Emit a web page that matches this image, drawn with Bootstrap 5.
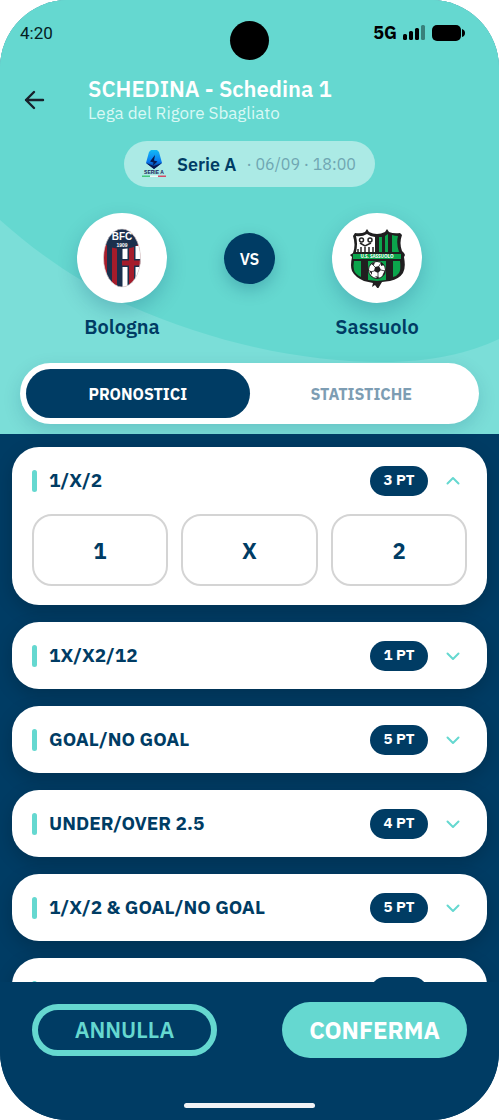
<!DOCTYPE html>
<html lang="it">
<head>
<meta charset="utf-8">
<meta name="viewport" content="width=device-width, initial-scale=1">
<title>Schedina 1</title>
<link href="https://cdn.jsdelivr.net/npm/bootstrap@5.3.0/dist/css/bootstrap.min.css" rel="stylesheet">
<style>
:root { --navy: #003c64; --aqua: #65d8d0; }
body { font-family: "IBM Plex Sans", "Noto Sans", sans-serif; background: #fff; color: var(--navy); }
.phone { height: 100vh; border-radius: 68px; background: var(--navy); }
.hero { background: #7bded8; height: 434px; }
.hero-wave { position: absolute; inset: 0; width: 100%; height: 100%; }
.statusbar { height: 66px; padding: 0 33px 0 20px; color: #04201f; }
.clock { font: 17px/24px Roboto, sans-serif; }
.net { font-size: 18px; line-height: 24px; font-weight: 700; color: #000; margin-right: 6px; }
.camera { position: absolute; top: 21px; left: 50%; width: 39px; height: 39px; margin-left: -20px; background: #000; border-radius: 50%; }
.titlebar { height: 75px; padding: 10px 20px 0 20px; gap: 40px; }
.back { width: 28px; height: 28px; margin-top: 10px; }
.app-title { font-size: 22px; line-height: 26px; font-weight: 600; }
.app-sub { font-size: 17px; line-height: 22px; color: #d9f8f5; }
.league { height: 46px; width: 251px; border-radius: 23px; background: #abeae5; color: #6fa6b2; font-size: 16px; padding: 0 17px; }
.league-name { font-size: 18px; font-weight: 600; color: var(--navy); margin: 0 10px; }
.teams { gap: 57px; margin-top: 26px; }
.team { width: 90px; }
.crest { width: 90px; height: 90px; border-radius: 50%; background: #fff; box-shadow: 0 8px 20px rgba(0,60,100,.22); }
.team-name { font-size: 20px; line-height: 24px; font-weight: 600; margin-top: 12px; }
.versus { width: 51px; height: 51px; margin-top: 20px; border-radius: 50%; background: var(--navy); font-size: 16px; font-weight: 600; box-shadow: 0 6px 16px rgba(0,60,100,.25); }
.tabs { margin: 24px 20px 0; height: 61px; padding: 6px; border-radius: 31px; background: #fff; box-shadow: 0 6px 18px rgba(0,60,100,.16); }
.tab { border: 0; border-radius: 25px; background: none; color: #7d9db3; font-size: 16px; font-weight: 700; }
.tab.on { background: var(--navy); color: #fff; }
.markets { min-height: 0; padding: 13px 12px 0; gap: 17px; }
.market { flex: none; border-radius: 27px; background: #fff; box-shadow: 0 6px 18px rgba(0,0,0,.18); padding: 0 20px; }
.market-head { width: 100%; height: 67px; border: 0; background: none; padding: 0 7px 0 0; color: var(--navy); }
.tick { width: 5px; height: 22px; border-radius: 3px; background: var(--aqua); margin-right: 12px; }
.market-name { font-size: 19px; font-weight: 700; }
.points { width: 58px; height: 30px; border-radius: 15px; background: var(--navy); color: #fff; font-size: 15px; font-weight: 700; margin-right: 18px; }
.picks { gap: 13px; padding-bottom: 19px; }
.pick { height: 72px; border: 2px solid #d4d4d4; border-radius: 20px; background: #fff; color: var(--navy); font-size: 22px; font-weight: 700; }
.actions { height: 138px; padding: 20px 32px 0; background: var(--navy); }
.act { width: 185px; border-radius: 28px; font-weight: 600; padding: 0; }
.act-no { height: 52px; border: 6px solid var(--aqua); background: none; color: var(--aqua); font-size: 22px; line-height: 24px; }
.act-yes { height: 56px; border: 0; background: var(--aqua); color: #fff; font-size: 24px; font-weight: 700; }
.home { position: absolute; bottom: 12px; left: 50%; width: 131px; height: 5px; margin-left: -66px; border-radius: 3px; background: #f1f3f6; }
</style>
</head>
<body>
<div class="phone position-relative overflow-hidden d-flex flex-column">
  <header class="hero flex-shrink-0 position-relative">
    <svg class="hero-wave" viewBox="0 0 499 434" preserveAspectRatio="none" aria-hidden="true"><path fill="#65d8d0" d="M0 0V220C38 254 82 284 128 305C220 346 310 362 383 362C430 362 470 353 499 339V0Z"/></svg>
    <div class="position-relative">
      <div class="statusbar d-flex align-items-center justify-content-between">
        <span class="clock">4:20</span>
        <span class="d-flex align-items-center">
          <span class="net">5G</span>
          <svg width="63" height="18" viewBox="0 0 63 18" aria-hidden="true"><rect x="0" y="10" width="4" height="6" rx="1.5"/><rect x="6" y="7" width="4" height="9" rx="1.5"/><rect x="12" y="4" width="4" height="12" rx="1.5"/><rect x="18" y="1" width="4" height="15" rx="1.5" fill="#39807b"/><rect x="29" y="1" width="29" height="16" rx="5"/><path d="M59 5q3 1 3 4t-3 4z"/></svg>
        </span>
      </div>
      <div class="camera"></div>
      <div class="titlebar d-flex align-items-start">
        <button class="back btn p-0 border-0 d-flex" aria-label="Indietro"><svg width="28" height="28" viewBox="0 0 28 28" fill="none" stroke="#17212b" stroke-width="2.4" stroke-linecap="round" stroke-linejoin="round"><path d="M23 14H6M14 6L6 14l8 8"/></svg></button>
        <div>
          <h1 class="app-title text-white m-0">SCHEDINA - Schedina 1</h1>
          <div class="app-sub">Lega del Rigore Sbagliato</div>
        </div>
      </div>
      <div class="league d-flex align-items-center mx-auto text-nowrap">
        <svg width="26" height="30" viewBox="0 0 26 30" aria-hidden="true"><defs><linearGradient id="sa" x2="0" y2="1"><stop stop-color="#13b9f5"/><stop offset=".6" stop-color="#087bf1"/><stop offset="1" stop-color="#08206f"/></linearGradient></defs><path fill="url(#sa)" d="M10 1h6l2 2 3 11-8 6-8-6L8 3z"/><path fill="#08174f" d="M14 6L9 12.500l3.500 1-.5 3 4.500-4-3.500-1zM5 14l8 3 8-3-8 6z"/><text x="13" y="25" text-anchor="middle" font-size="5" font-weight="700" fill="#15245a" font-family="Liberation Sans, sans-serif">SERIE A</text><path fill="#45c77c" d="M1 26.500h8V28H1z"/><path fill="#f3f7f6" d="M9 26.500h8V28H9z"/><path fill="#d64b66" d="M17 26.500h8V28h-8z"/></svg>
        <span class="league-name">Serie A</span><span>· 06/09 · 18:00</span>
      </div>
      <div class="teams d-flex justify-content-center">
        <div class="team d-flex flex-column align-items-center">
          <div class="crest d-flex align-items-center justify-content-center">
            <svg width="40" height="60" viewBox="0 0 40 60" role="img" aria-label="Bologna FC 1909"><clipPath id="bo"><ellipse cx="20" cy="30" rx="18.500" ry="29"/></clipPath><g clip-path="url(#bo)"><path fill="#a51c2b" d="M0 0h40v60H0z"/><path fill="#1b2f4c" d="M5 0h5v60H5zM15 0h6v60h-6z"/><path fill="#fff" d="M20.500 18H40v42H20.500z"/><path fill="#1b2f4c" d="M25.500 18h8v13H40v8h-6.500v21h-8V39H20v-8h5.500z"/><path fill="#a51c2b" d="M27 18h5v14.500h8v5h-8V60h-5V37.500h-7v-5h7z"/><path fill="#1b2f4c" d="M0 0h40v14q-8 7-20 7T0 14z"/></g><ellipse cx="20" cy="30" rx="18.500" ry="29" fill="none" stroke="#ddd" stroke-width=".7"/><text x="20" y="12" text-anchor="middle" font-size="10" font-weight="700" fill="#fff" font-family="Liberation Sans, sans-serif">BFC</text><text x="20" y="19" text-anchor="middle" font-size="5" font-weight="700" fill="#fff" font-family="Liberation Sans, sans-serif">1909</text></svg>
          </div>
          <div class="team-name">Bologna</div>
        </div>
        <div class="versus d-flex align-items-center justify-content-center text-white">VS</div>
        <div class="team d-flex flex-column align-items-center">
          <div class="crest d-flex align-items-center justify-content-center">
            <svg width="56" height="60" viewBox="0 0 56 60" role="img" aria-label="U.S. Sassuolo"><path fill="#201f20" d="M18 1l2 3q4 2 8 2t8-2l2-3 2 3q5 2 11 1l2 2q-3 8 0 16l2 2 1 2-1 2q2 11-1 16-4 6-13 8l-8 1-3 5-1 2-3-4-3 2 1-4-9-2Q6 49 3 43q-2-5 0-14l-2-2 3-2q3-8 0-17l2-3q6 1 10-1z"/><path fill="#fff" d="M7 8q6 1 11-2 4 3 8 3v15H7q2-8 0-16z"/><path fill="#0ba54c" d="M30 9h3v15h-3zM36 8l3-2v18h-3zM43 7q3 1 6 1-2 7 1 16h-7zM4 26h48v5H4z"/><path fill="#0ba54c" d="M5 33h7v16q-6-3-7-7-1-4 0-9zM19 33h18v19l-9 1-9-1zM44 33h7q1 9-1 12-2 3-6 4z"/><g fill="none" stroke="#262626" stroke-width="1.500"><circle cx="12.500" cy="12" r="2"/><circle cx="21" cy="12" r="2"/><path d="M11 15l5 3 6-3M12 24v-5M16 24v-5M20 24v-5M24 24v-5M9 24v-3"/></g><text x="28" y="30" text-anchor="middle" font-size="4.500" font-weight="700" fill="#fff" font-family="Noto Sans, sans-serif">U.S. SASSUOLO</text><circle cx="28" cy="42" r="8.500" fill="#fff" stroke="#201f20"/><path fill="#201f20" d="M26 39l4-1 2 4-3 3-4-2zM22 36l4-2-1 3zM32 34l3 3-3 1zM20 42l3 2v3zM36 42v4l-3 2zM26 48l4 1-1 2z"/><path stroke="#201f20" stroke-width=".8" d="M26 39l-3-3M30 38l2-3M32 42l4 1M29 45v4M25 43l-4 1"/></svg>
          </div>
          <div class="team-name">Sassuolo</div>
        </div>
      </div>
      <nav class="tabs d-flex" aria-label="Sezioni">
        <button class="tab on flex-fill w-50">PRONOSTICI</button>
        <button class="tab flex-fill w-50">STATISTICHE</button>
      </nav>
    </div>
  </header>

  <main class="markets flex-grow-1 overflow-hidden d-flex flex-column">
    <section class="market">
      <button class="market-head d-flex align-items-center" aria-expanded="true"><span class="tick"></span><span class="market-name me-auto">1/X/2</span><span class="points d-flex align-items-center justify-content-center">3 PT</span><svg width="14" height="14" viewBox="0 0 14 14" fill="none" stroke="#65d8d0" stroke-width="2" stroke-linecap="round" stroke-linejoin="round"><path d="M1.500 9.500L7 4l5.500 5.500"/></svg></button>
      <div class="picks d-flex">
        <button class="pick flex-fill">1</button><button class="pick flex-fill">X</button><button class="pick flex-fill">2</button>
      </div>
    </section>
    <section class="market">
      <button class="market-head d-flex align-items-center" aria-expanded="false"><span class="tick"></span><span class="market-name me-auto">1X/X2/12</span><span class="points d-flex align-items-center justify-content-center">1 PT</span><svg width="14" height="14" viewBox="0 0 14 14" fill="none" stroke="#65d8d0" stroke-width="2" stroke-linecap="round" stroke-linejoin="round"><path d="M1.500 4.500L7 10l5.500-5.500"/></svg></button>
    </section>
    <section class="market">
      <button class="market-head d-flex align-items-center" aria-expanded="false"><span class="tick"></span><span class="market-name me-auto">GOAL/NO GOAL</span><span class="points d-flex align-items-center justify-content-center">5 PT</span><svg width="14" height="14" viewBox="0 0 14 14" fill="none" stroke="#65d8d0" stroke-width="2" stroke-linecap="round" stroke-linejoin="round"><path d="M1.500 4.500L7 10l5.500-5.500"/></svg></button>
    </section>
    <section class="market">
      <button class="market-head d-flex align-items-center" aria-expanded="false"><span class="tick"></span><span class="market-name me-auto">UNDER/OVER 2.5</span><span class="points d-flex align-items-center justify-content-center">4 PT</span><svg width="14" height="14" viewBox="0 0 14 14" fill="none" stroke="#65d8d0" stroke-width="2" stroke-linecap="round" stroke-linejoin="round"><path d="M1.500 4.500L7 10l5.500-5.500"/></svg></button>
    </section>
    <section class="market">
      <button class="market-head d-flex align-items-center" aria-expanded="false"><span class="tick"></span><span class="market-name me-auto">1/X/2 &amp; GOAL/NO GOAL</span><span class="points d-flex align-items-center justify-content-center">5 PT</span><svg width="14" height="14" viewBox="0 0 14 14" fill="none" stroke="#65d8d0" stroke-width="2" stroke-linecap="round" stroke-linejoin="round"><path d="M1.500 4.500L7 10l5.500-5.500"/></svg></button>
    </section>
    <section class="market">
      <div class="market-head d-flex align-items-center"><span class="tick me-auto"></span><span class="points"></span><svg width="14" height="14"></svg></div>
    </section>
  </main>

  <footer class="actions flex-shrink-0">
    <div class="d-flex justify-content-between align-items-center">
      <button class="act act-no">ANNULLA</button>
      <button class="act act-yes">CONFERMA</button>
    </div>
  </footer>
  <div class="home"></div>
</div>
<script src="https://cdn.jsdelivr.net/npm/bootstrap@5.3.0/dist/js/bootstrap.bundle.min.js"></script>
</body>
</html>
